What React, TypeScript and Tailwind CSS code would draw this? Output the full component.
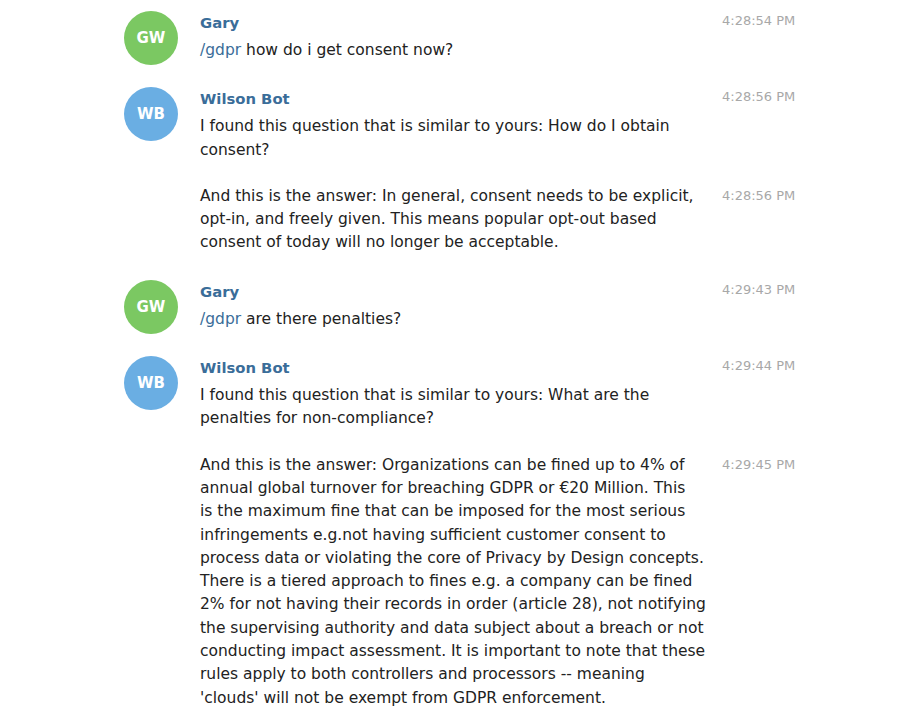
import type { ReactNode } from "react"

type Part = { lines: ReactNode[]; time: string }

type Msg = {
  initials: string
  color: string
  name: string
  parts: Part[]
}

const cmd = (c: string, rest: string) => (
  <>
    <span className="text-[#3a6d99]">{c}</span> {rest}
  </>
)

// lines are kept as the client wrapped them
const messages: Msg[] = [
  {
    initials: "GW",
    color: "bg-[#7bc862]",
    name: "Gary",
    parts: [{ lines: [cmd("/gdpr", "how do i get consent now?")], time: "4:28:54 PM" }],
  },
  {
    initials: "WB",
    color: "bg-[#6aaee3]",
    name: "Wilson Bot",
    parts: [
      {
        lines: ["I found this question that is similar to yours: How do I obtain", "consent?"],
        time: "4:28:56 PM",
      },
      {
        lines: [
          "And this is the answer: In general, consent needs to be explicit,",
          "opt-in, and freely given. This means popular opt-out based",
          "consent of today will no longer be acceptable.",
        ],
        time: "4:28:56 PM",
      },
    ],
  },
  {
    initials: "GW",
    color: "bg-[#7bc862]",
    name: "Gary",
    parts: [{ lines: [cmd("/gdpr", "are there penalties?")], time: "4:29:43 PM" }],
  },
  {
    initials: "WB",
    color: "bg-[#6aaee3]",
    name: "Wilson Bot",
    parts: [
      {
        lines: ["I found this question that is similar to yours: What are the", "penalties for non-compliance?"],
        time: "4:29:44 PM",
      },
      {
        lines: [
          "And this is the answer: Organizations can be fined up to 4% of",
          "annual global turnover for breaching GDPR or €20 Million. This",
          "is the maximum fine that can be imposed for the most serious",
          "infringements e.g.not having sufficient customer consent to",
          "process data or violating the core of Privacy by Design concepts.",
          "There is a tiered approach to fines e.g. a company can be fined",
          "2% for not having their records in order (article 28), not notifying",
          "the supervising authority and data subject about a breach or not",
          "conducting impact assessment. It is important to note that these",
          "rules apply to both controllers and processors -- meaning",
          "'clouds' will not be exempt from GDPR enforcement.",
        ],
        time: "4:29:45 PM",
      },
    ],
  },
]

function Row({ msg }: { msg: Msg }) {
  return (
    <div className="flex items-start">
      {/* avatar hangs a little below short rows, as in the original */}
      <div
        className={`-mb-[3px] flex size-[54px] shrink-0 items-center justify-center rounded-full text-[15px] font-bold text-white ${msg.color}`}
      >
        {msg.initials}
      </div>
      <div className="ml-[22px] flex flex-col">
        <div className="flex">
          <div className="w-[522px] text-[14.8px] font-bold leading-[23px] text-[#3a6d99]">{msg.name}</div>
          <div className="pt-[1px] text-[13px] leading-[18px] text-[#a8a8a8]">{msg.parts[0].time}</div>
        </div>
        {msg.parts.map((p, i) => (
          <div key={i} className={`flex ${i === 0 ? "mt-[5px]" : "mt-[23px]"}`}>
            <div className="w-[510px] text-[15.5px] leading-[23.3px] text-[#222]">
              {p.lines.map((l, j) => (
                <div key={j} className="whitespace-nowrap">
                  {l}
                </div>
              ))}
            </div>
            <div className="ml-[12px] pt-[2px] text-[13px] leading-[18px] text-[#a8a8a8]">
              {i > 0 ? p.time : null}
            </div>
          </div>
        ))}
      </div>
    </div>
  )
}

export default function App() {
  return (
    <main
      className="min-h-screen w-full bg-white pl-[124px] pt-[11px]"
      style={{ fontFamily: '"DejaVu Sans", Verdana, sans-serif' }}
    >
      <div className="flex flex-col gap-[25px]">
        {messages.map((m, i) => (
          <Row key={i} msg={m} />
        ))}
      </div>
    </main>
  )
}
